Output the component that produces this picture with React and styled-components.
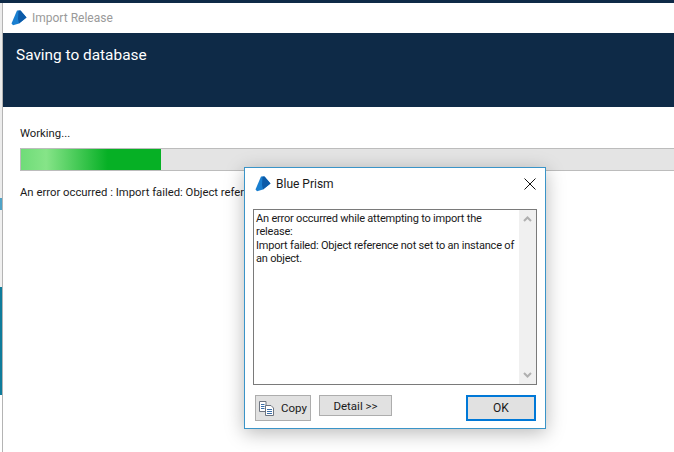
import React from "react";
import styled, { createGlobalStyle } from 'styled-components';

const GlobalStyle = createGlobalStyle`
	html, body {
		margin: 0;
		padding: 0;
		height: 452px;
		overflow: hidden;
		background: #ffffff;
	}
	* {
		box-sizing: border-box;
	}
`

function PrismLogo({ size }) {
	return (
		<svg width={size} height={size} viewBox="0 0 16 16">
			<path d="M0.5 13.5 L6 0.5 L9.5 0.5 L15.5 7.5 L8 13.5 L2 15.2 Z" fill="#1a7fd0" />
			<path d="M7.5 0.5 L9.5 0.5 L15.5 7.5 L8 13.5 L7 9 Z" fill="#0b5aa8" />
		</svg>
	)
}

function CopyIcon() {
	return (
		<svg width="16" height="16" viewBox="0 0 16 16" fill="none" stroke="#6d7480">
			<path d="M0.5 1.5 H7 V11.5 H0.5 Z" fill="#ffffff" />
			<path d="M2 4.5 H5.5 M2 6.5 H5.5 M2 8.5 H5.5" stroke="#3b6ea8" />
			<path d="M6.5 5.5 H12 L14.5 8 V15.5 H6.5 Z" fill="#ffffff" />
			<path d="M8 9.5 H13 M8 11.5 H13 M8 13.5 H13" stroke="#3b6ea8" />
		</svg>
	)
}

export default function App() {
	return (
		<Screen>
			<GlobalStyle />
			<TopStrip />
			<Body>
				<LeftEdge>
					<EdgeBlock $height={195} $color="#ececec" />
					<EdgeBlock $height={12} $color="#4fa3c7" />
					<EdgeBlock $height={77} $color="#f0f0f0" />
					<EdgeBlock $height={108} $color="#0e7c9c" />
					<EdgeBlock $height={57} $color="#ffffff" />
				</LeftEdge>

				<ImportWindow>
					<TitleBar>
						<PrismLogo size={16} />
						<WindowTitle>Import Release</WindowTitle>
					</TitleBar>

					<Banner>
						<BannerHeading>Saving to database</BannerHeading>
					</Banner>

					<Content>
						<Label>Working...</Label>
						<ProgressTrack>
							<ProgressFill style={{ width: 140 }} />
						</ProgressTrack>
						<Message>An error occurred : Import failed: Object reference not set to an instance of an object.</Message>
					</Content>
				</ImportWindow>
			</Body>

			<Dialog>
				<DialogHeader>
					<PrismLogo size={16} />
					<DialogTitle>Blue Prism</DialogTitle>
					<CloseButton>
						<svg width="12" height="12" viewBox="0 0 12 12" stroke="#111111" strokeWidth="1">
							<path d="M0.5 0.5 L11.5 11.5 M11.5 0.5 L0.5 11.5" />
						</svg>
					</CloseButton>
				</DialogHeader>

				<ErrorBox>
					<ErrorText>
						An error occurred while attempting to import the release:<br />
						Import failed: Object reference not set to an instance of an object.
					</ErrorText>
					<ScrollBar>
						<ScrollArrow viewBox="0 0 9 6"><path d="M1 5 L4.5 1.5 L8 5" /></ScrollArrow>
						<ScrollArrow viewBox="0 0 9 6"><path d="M1 1 L4.5 4.5 L8 1" /></ScrollArrow>
					</ScrollBar>
				</ErrorBox>

				<ButtonRow>
					<CopyButton><CopyIcon />Copy</CopyButton>
					<DetailButton>Detail &gt;&gt;</DetailButton>
					<OkButton>OK</OkButton>
				</ButtonRow>
			</Dialog>
		</Screen>
	)
}

const Screen = styled.div`
	position: relative;
	display: flex;
	flex-direction: column;
	width: 674px;
	height: 452px;
	overflow: hidden;
	font-family: Roboto, "Open Sans", sans-serif;
	font-size: 11.3px;
	color: #1a1a1a;
`
const TopStrip = styled.div`
	flex: 0 0 3px;
	background-color: #0e2a47;
`
const Body = styled.div`
	display: flex;
	flex: 1;
`
const LeftEdge = styled.div`
	display: flex;
	flex-direction: column;
	flex: 0 0 2px;
`
const EdgeBlock = styled.div`
	height: ${ props => props.$height }px;
	background-color: ${ props => props.$color };
`
const ImportWindow = styled.div`
	display: flex;
	flex-direction: column;
	flex: 1;
	border-left: 1px solid #b4b4b4;
	background-color: white;
`
const TitleBar = styled.div`
	display: flex;
	align-items: center;
	gap: 5px;
	height: 30px;
	padding-left: 8px;
`
const WindowTitle = styled.span`
	font-size: 12px;
	color: #9a9a9a;
`
const Banner = styled.div`
	height: 74px;
	padding: 11px 13px;
	background-color: #0e2a47;
`
const BannerHeading = styled.h1`
	margin: 0;
	font-size: 15.4px;
	font-weight: 400;
	line-height: 22px;
	color: #ffffff;
`
const Content = styled.div`
	display: flex;
	flex-direction: column;
	padding: 19px 0 0 17px;
`
const Label = styled.div`
	line-height: 15px;
`
const ProgressTrack = styled.div`
	height: 23px;
	margin-top: 7px;
	border: 1px solid #bcbcbc;
	border-right: none;
	background-color: #e4e4e4;
`
const ProgressFill = styled.div`
	height: 100%;
	background: linear-gradient(90deg, #6fdc78 0, #86e488 18%, #06b025 62%);
`
const Message = styled.div`
	margin-top: 14px;
	white-space: nowrap;
	line-height: 15px;
`
const Dialog = styled.div`
	position: absolute;
	left: 244px;
	top: 167px;
	display: flex;
	flex-direction: column;
	width: 302px;
	height: 262px;
	padding: 0 8px;
	border: 1px solid #3a94c8;
	background-color: white;
	box-shadow: 0 4px 18px rgba(0, 0, 0, 0.28);
`
const DialogHeader = styled.div`
	display: flex;
	align-items: center;
	gap: 5px;
	height: 31px;
	padding-left: 2px;
`
const DialogTitle = styled.span`
	font-size: 12px;
	color: #1a1a1a;
`
const CloseButton = styled.div`
	display: flex;
	margin-left: auto;
	margin-right: 1px;
`
const ErrorBox = styled.div`
	display: flex;
	height: 176px;
	margin-top: 10px;
	border: 1px solid #7a7a7a;
`
const ErrorText = styled.div`
	flex: 1;
	padding: 2px 2px;
	line-height: 13.4px;
	font-size: 11px;
	letter-spacing: -0.2px;
`
const ScrollBar = styled.div`
	display: flex;
	flex-direction: column;
	justify-content: space-between;
	align-items: center;
	flex: 0 0 17px;
	padding: 6px 0;
	background-color: #f0f0f0;
`
const ScrollArrow = styled.svg`
	width: 9px;
	height: 6px;
	fill: none;
	stroke: #b0b0b0;
	stroke-width: 2;
`
const ButtonRow = styled.div`
	display: flex;
	align-items: flex-start;
	margin-top: 10px;
	padding: 0 0 0 2px;
`
const BaseButton = styled.div`
	display: flex;
	align-items: center;
	justify-content: center;
	border: 1px solid #adadad;
	background-color: #e1e1e1;
	font-size: 11.5px;
`
const CopyButton = styled(BaseButton)`
	width: 56px;
	height: 26px;
	gap: 6px;
`
const DetailButton = styled(BaseButton)`
	width: 73px;
	height: 21px;
	margin-left: 8px;
`
const OkButton = styled(BaseButton)`
	width: 70px;
	height: 26px;
	margin-left: auto;
	margin-right: 1px;
	border: 2px solid #0078d7;
	font-size: 12px;
`
